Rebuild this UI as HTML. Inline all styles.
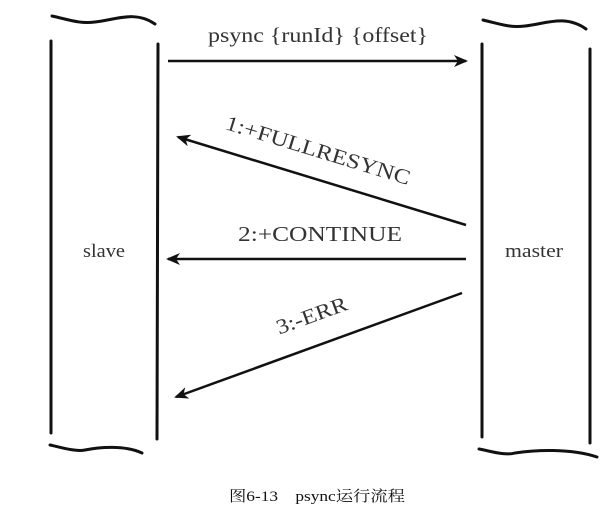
<!DOCTYPE html>
<html><head><meta charset="utf-8"><style>
html,body{margin:0;padding:0;background:#fff;width:610px;height:512px;overflow:hidden}
text{font-family:"Liberation Serif","Noto Serif CJK SC",serif;fill:#333}
</style></head><body>
<svg width="610" height="512" viewBox="0 0 610 512" xmlns="http://www.w3.org/2000/svg">
<defs>
<marker id="a" viewBox="0 0 14 12" refX="12" refY="6" markerWidth="14" markerHeight="12" markerUnits="userSpaceOnUse" orient="auto">
<path d="M0,0 L14,6 L0,12 L4,6 Z" fill="#111"/>
</marker>
</defs>
<g stroke="#111" stroke-width="3" fill="none" stroke-linecap="round">
<path d="M52,16 C70,20 80,24 95,22 C115,20 135,10 155,24"/>
<path d="M51,41 L51,433"/>
<path d="M158,44 L157,439"/>
<path d="M50,445 C60,447 75,452 85,450 C100,447 125,445 142,453"/>
<path d="M483,20 C500,24 510,28 525,26 C545,24 565,14 586,29"/>
<path d="M482,44 L482,437"/>
<path d="M590,49 L590,443"/>
<path d="M479,449 C490,451 505,456 515,453 C535,450 570,448 597,457"/>
</g>
<g stroke="#111" stroke-width="2.5" fill="none">
<line x1="168" y1="61" x2="466" y2="61" marker-end="url(#a)"/>
<line x1="466" y1="225" x2="178" y2="137" marker-end="url(#a)"/>
<line x1="466" y1="259" x2="168" y2="259" marker-end="url(#a)"/>
<line x1="462" y1="293" x2="176" y2="397" marker-end="url(#a)"/>
</g>
<text x="208" y="42" font-size="21" textLength="220" lengthAdjust="spacingAndGlyphs">psync {runId} {offset}</text>
<text x="238" y="241" font-size="21" textLength="164" lengthAdjust="spacingAndGlyphs">2:+CONTINUE</text>
<text transform="translate(316,157) rotate(17)" font-size="21" x="-96" textLength="192" lengthAdjust="spacingAndGlyphs">1:+FULLRESYNC</text>
<text transform="translate(314,322) rotate(-20)" font-size="21" x="-37" textLength="74" lengthAdjust="spacingAndGlyphs">3:-ERR</text>
<text x="83" y="257" font-size="19" textLength="42" lengthAdjust="spacingAndGlyphs">slave</text>
<text x="505" y="257" font-size="19" textLength="58" lengthAdjust="spacingAndGlyphs">master</text>
<text x="229" y="501" font-size="15" textLength="176" lengthAdjust="spacingAndGlyphs" style="fill:#111">图6-13　psync运行流程</text>
</svg>
</body></html>
